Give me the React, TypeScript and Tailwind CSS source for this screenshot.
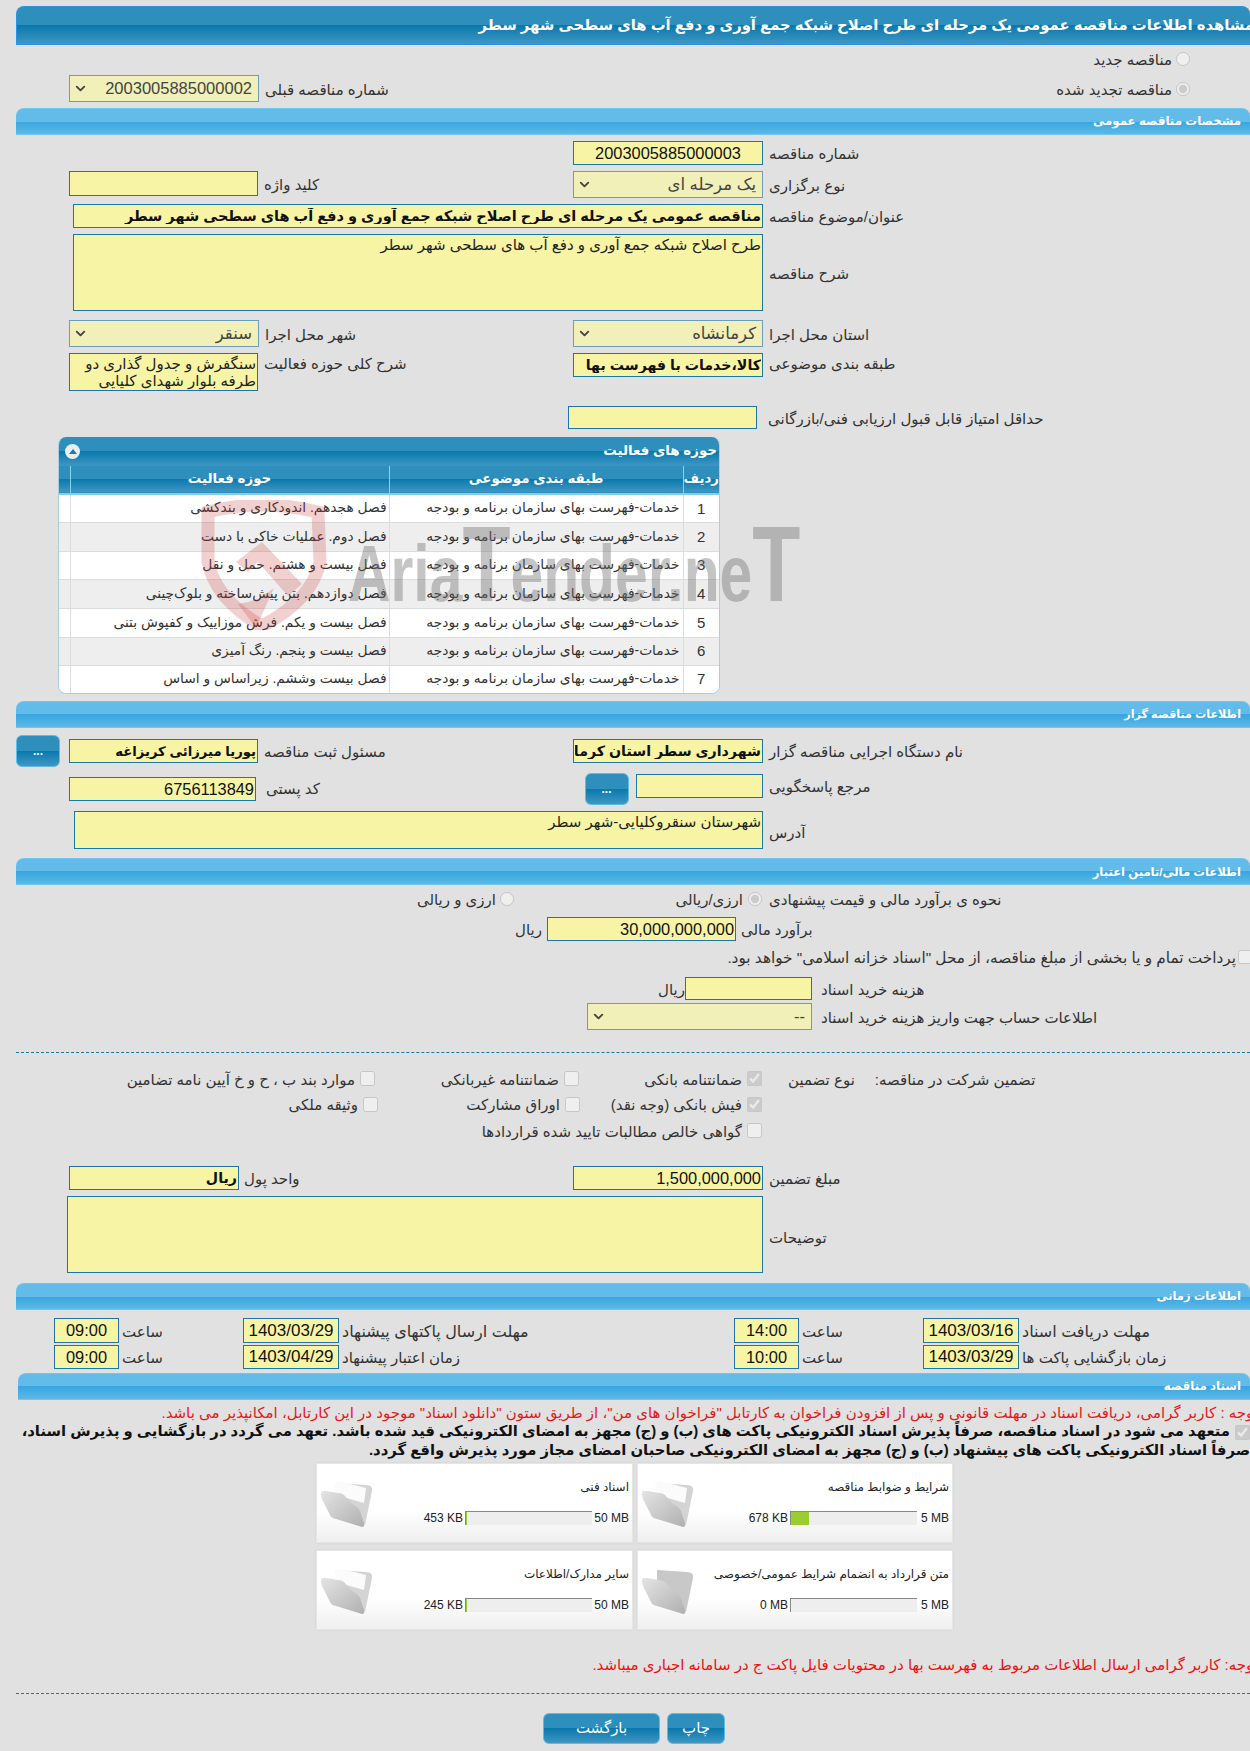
import React from "react";
import { ChevronDown } from "lucide-react";

const barDark = "bg-[linear-gradient(180deg,#2e8fbc_0%,#2e8fbc_50%,#0a78ac_50%,#3f97c3_100%)]";
const barLight = "bg-[linear-gradient(180deg,#62bbe9_0%,#62bbe9_50%,#38a6df_50%,#5cb8e8_100%)]";

function L({ children, className = "", size = "text-[15px] text-[#333]" }: { children: React.ReactNode; className?: string; size?: string }) {
  return (
    <span dir="rtl" className={"inline-block pt-[2px] whitespace-nowrap leading-[16px] " + size + " " + className}>
      {children}
    </span>
  );
}

function Input({ value = "", className = "", size = "" }: { value?: string; className?: string; size?: string }) {
  return (
    <input
      readOnly
      dir="rtl"
      value={value}
      className={"shrink-0 bg-[#f7f5a5] border border-[#1b76a9] px-px outline-none text-[#111] " + (size || "text-[16.4px]") + " " + className}
    />
  );
}

function Area({ value = "", className = "" }: { value?: string; className?: string }) {
  return (
    <textarea
      readOnly
      dir="rtl"
      value={value}
      className={"shrink-0 resize-none overflow-hidden bg-[#f7f5a5] border border-[#1b76a9] px-px pt-px text-[15px] leading-[17px] text-[#222] outline-none " + className}
    />
  );
}

function Sel({ value, className = "" }: { value: string; className?: string }) {
  return (
    <div className={"shrink-0 flex items-center justify-between bg-[#f1f0b8] border border-[#6a9cbf] pl-[3px] pr-[6px] h-[27px] text-[16.5px] text-[#444] " + className}>
      <ChevronDown size={15} strokeWidth={3} color="#444" />
      <span dir="rtl" className="whitespace-nowrap">{value}</span>
    </div>
  );
}

function Section({ title, className = "", size = "text-[11.8px]" }: { title: string; className?: string; size?: string }) {
  return (
    <div dir="rtl" className={"h-[27px] flex items-center rounded-tl-[8px] rounded-tr-[8px] border-t border-[#6cc8f0] border-b pr-[9px] font-bold text-white " + size + " " + barLight + " " + className}>
      {title}
    </div>
  );
}

function Row({ left, right, className = "" }: { left?: React.ReactNode; right?: React.ReactNode; className?: string }) {
  return (
    <div className={"flex items-start " + className}>
      <div className="w-[573px] shrink-0 pl-[69px] flex items-center">{left}</div>
      <div className="flex items-center">{right}</div>
    </div>
  );
}

function Check({ w, label, checked = false }: { w: string; label: string; checked?: boolean }) {
  return (
    <div className={"shrink-0 flex items-center justify-end gap-[5px] " + w}>
      <L>{label}</L>
      <input type="checkbox" disabled checked={checked} readOnly className="m-0 w-[15px] h-[15px] shrink-0" />
    </div>
  );
}

function Folder({ paper = true }: { paper?: boolean }) {
  return (
    <svg width="60" height="60" viewBox="0 0 60 60" className="shrink-0 mt-[7px] -ml-[1px]">
      <defs>
        <linearGradient id="fold" x1="0" y1="0" x2="1" y2="1">
          <stop offset="0" stopColor="#e4e4e4" />
          <stop offset="1" stopColor="#b0b0b0" />
        </linearGradient>
      </defs>
      <path d="M20 12 L50 14 Q57 14 56 20 L49 54 L20 30 Z" fill={paper ? "#d4d4d4" : "#c8c8c8"} />
      {paper && <path d="M18 13 L22 10 L50 17 L48 32 L20 24 Z" fill="#fbfbfb" />}
      <path d="M6 20 Q4 22 6 28 L14 44 Q15 47 20 48 L46 56 Q49 56 48 52 L44 40 Q42 36 36 33 L28 24 Q26 22 22 22 L10 20 Z" fill="url(#fold)" />
    </svg>
  );
}

function Tile({ title, size, max, fill, w, maxW, paper = true }: { title: string; size: string; max: string; fill: number; w: string; maxW: string; paper?: boolean }) {
  return (
    <div className={"h-[80px] flex bg-[linear-gradient(180deg,#ffffff_0%,#ffffff_60%,#efefef_100%)] border border-[#e6e6e6] shadow-[0_0_2px_#cfcfcf] shrink-0 " + w}>
      <Folder paper={paper} />
      <div className="flex-1 flex flex-col items-end pr-[3px] pt-[13px]">
        <L size="text-[12px] text-[#222]">{title}</L>
        <div className="mt-[16px] flex items-center gap-[2px] text-[12px] leading-[14px] text-[#222]">
          <span className="whitespace-nowrap">{size}</span>
          <div className="w-[127px] h-[14px] bg-[#eeeeee] border-t border-l border-[#888]">
            <div className="h-full bg-[#9acd32]" style={{ width: fill }} />
          </div>
          <span className={"whitespace-nowrap text-right " + maxW}>{max}</span>
        </div>
      </div>
    </div>
  );
}

const activities = [
  "فصل هجدهم. اندودکاری و بندکشی",
  "فصل دوم. عملیات خاکی با دست",
  "فصل بیست و هشتم. حمل و نقل",
  "فصل دوازدهم. بتن پیش‌ساخته و بلوک‌چینی",
  "فصل بیست و یکم. فرش موزاییک و کفپوش بتنی",
  "فصل بیست و پنجم. رنگ آمیزی",
  "فصل بیست وششم. زیراساس و اساس",
];
const rowHeights = ["h-[28px]", "h-[29px]", "h-[28px]", "h-[29px]", "h-[29px]", "h-[28px]", "h-[28px]"];

function Watermark() {
  return (
    <div className="absolute left-[142px] top-[63px] w-[610px] h-[130px] pointer-events-none">
      <svg width="130" height="130" viewBox="0 0 130 130" className="absolute left-0 top-0">
        <path d="M8 12 Q62 -2 118 12 L120 62 Q112 100 62 126 Q16 100 8 62 Z" fill="none" stroke="#c83c3c" strokeOpacity="0.24" strokeWidth="13" />
        <path d="M36 62 L62 42 L102 84 L88 96 L58 62 L48 72 Z" fill="#c83c3c" fillOpacity="0.24" />
        <path d="M60 98 L74 88 L56 128 L38 104 L48 102 Z" fill="#c83c3c" fillOpacity="0.24" />
      </svg>
      <div className="absolute left-[148px] top-[4px] flex items-baseline whitespace-nowrap origin-left scale-x-[0.735] text-[#6e6e6e]/40 font-bold text-[80px] leading-[120px]">
        Aria<span className="text-[107px]">T</span>ender.ne<span className="text-[107px]">T</span>
      </div>
    </div>
  );
}

function ActivityTable() {
  return (
    <div className="relative ml-[58px] mt-[8px] w-[662px] h-[257px]">
      <div className="w-[662px] h-[257px] rounded-[8px] overflow-hidden border-b border-x border-[#a8cde6] bg-white">
        <div dir="rtl" className={"h-[29px] flex items-center justify-between pr-[2px] pl-[6px] text-[13.4px] font-bold text-white " + barDark}>
          <span>حوزه های فعالیت</span>
          <span className="w-[15px] h-[15px] rounded-full bg-[#e6eef3] flex items-center justify-center">
            <span className="w-0 h-0 border-x-[4px] border-x-transparent border-b-[5px] border-b-[#1b7aa9]" />
          </span>
        </div>
        <table dir="rtl" className="table-fixed border-collapse w-[660px] text-[13.8px] text-[#333]">
          <colgroup>
            <col className="w-[36px]" />
            <col className="w-[294px]" />
            <col className="w-[319px]" />
            <col className="w-[11px]" />
          </colgroup>
          <thead>
            <tr className={"h-[28px] text-white font-bold text-[13.4px] border-b-2 border-[#7fd0f0] " + barDark}>
              <th className="font-bold border-l border-[#8fd0ef]">ردیف</th>
              <th className="font-bold border-l border-[#8fd0ef]">طبقه بندی موضوعی</th>
              <th className="font-bold border-l border-[#8fd0ef]">حوزه فعالیت</th>
              <th />
            </tr>
          </thead>
          <tbody>
            {activities.map((a, i) => (
              <tr key={i} className={rowHeights[i] + " border-b border-[#dcdcdc] " + (i % 2 ? "bg-[#eeeeee]" : "bg-white")}>
                <td className="pt-px text-center text-[15px] border-l border-[#dcdcdc]">{i + 1}</td>
                <td className="pt-px pr-[3px] whitespace-nowrap border-l border-[#dcdcdc]">خدمات-فهرست بهای سازمان برنامه و بودجه</td>
                <td className="pt-px pr-[2px] whitespace-nowrap border-l border-[#dcdcdc]">{a}</td>
                <td />
              </tr>
            ))}
          </tbody>
        </table>
      </div>
      <Watermark />
    </div>
  );
}

export default function App() {
  return (
    <div className="w-[1250px] h-[1751px] overflow-hidden bg-[#e1e1e1] font-['Liberation_Sans','DejaVu_Sans',sans-serif]">
      <div className="h-[6px]" />
      <div dir="rtl" className={"ml-[16px] h-[39px] flex items-center rounded-tl-[8px] rounded-tr-[8px] border border-[#2c93de] border-r-0 text-[14.8px] font-bold text-white whitespace-nowrap overflow-hidden " + barDark}>
        <span className="-mr-[4px]">مشاهده اطلاعات مناقصه عمومی یک مرحله ای طرح اصلاح شبکه جمع آوری و دفع آب های سطحی شهر سطر</span>
      </div>

      <div className="mt-[7px] h-[14px] flex items-center justify-end gap-[4px] pr-[60px]">
        <L>مناقصه جدید</L>
        <input type="radio" disabled className="m-0 w-[14px] h-[14px]" />
      </div>
      <div className="mt-[9px] flex items-center pl-[69px] pr-[60px]">
        <Sel value="2003005885000002" className="w-[190px]" />
        <L className="ml-[6px]">شماره مناقصه قبلی</L>
        <div className="ml-auto flex items-center gap-[4px]">
          <L>مناقصه تجدید شده</L>
          <input type="radio" disabled checked readOnly className="m-0 w-[14px] h-[14px]" />
        </div>
      </div>

      <Section title="مشخصات مناقصه عمومی" className="ml-[16px] mt-[6px]" />

      <Row className="mt-[6px] h-[24px]" right={<><Input value="2003005885000003" className="w-[190px] h-[24px] text-center" /><L className="ml-[6px]">شماره مناقصه</L></>} />
      <Row
        className="mt-[6px] h-[27px]"
        left={<><Input className="w-[189px] h-[25px]" /><L className="ml-[6px]">کلید واژه</L></>}
        right={<><Sel value="یک مرحله ای" className="w-[190px]" /><L className="ml-[6px]">نوع برگزاری</L></>}
      />
      <div className="mt-[6px] ml-[73px] flex items-center">
        <Input size="text-[14.5px] font-bold" value="مناقصه عمومی یک مرحله ای طرح اصلاح شبکه جمع آوری و دفع آب های سطحی شهر سطر" className="w-[690px] h-[24px]" />
        <L className="ml-[6px]">عنوان/موضوع مناقصه</L>
      </div>
      <div className="mt-[6px] ml-[73px] flex items-center">
        <Area value="طرح اصلاح شبکه جمع آوری و دفع آب های سطحی شهر سطر" className="w-[690px] h-[77px]" />
        <L className="ml-[6px]">شرح مناقصه</L>
      </div>
      <Row
        className="mt-[9px] h-[27px]"
        left={<><Sel value="سنقر" className="w-[190px]" /><L className="ml-[6px]">شهر محل اجرا</L></>}
        right={<><Sel value="کرمانشاه" className="w-[190px]" /><L className="ml-[6px]">استان محل اجرا</L></>}
      />
      <Row
        className="mt-[6px] h-[38px]"
        left={<div className="flex items-start"><Area value="سنگفرش و جدول گذاری دو طرفه بلوار شهدای کلیایی" className="w-[189px] h-[38px] text-[#222]" /><L className="ml-[6px] mt-[1px]">شرح کلی حوزه فعالیت</L></div>}
        right={<div className="flex items-start"><Input size="text-[14.2px] font-bold" value="کالا،خدمات با فهرست بها" className="w-[190px] h-[24px]" /><L className="ml-[6px] mt-[1px]">طبقه بندی موضوعی</L></div>}
      />
      <div className="mt-[15px] pl-[568px] flex items-center">
        <Input className="w-[189px] h-[23px]" />
        <L className="ml-[11px]">حداقل امتیاز قابل قبول ارزیابی فنی/بازرگانی</L>
      </div>

      <ActivityTable />

      <Section title="اطلاعات مناقصه گزار" size="text-[11.2px]" className="ml-[16px] mt-[7px] h-[26px]" />

      <div className="mt-[7px] h-[32px] flex items-center pl-[16px]">
        <button className={"w-[44px] h-[32px] shrink-0 rounded-[6px] border border-[#5cbdea] text-white text-[12px] font-bold leading-none " + barDark}>...</button>
        <Input size="text-[13.2px] font-bold" value="پوریا میرزائی کریزاغه" className="ml-[9px] w-[189px] h-[24px]" />
        <L className="ml-[6px] w-[309px] shrink-0 text-left">مسئول ثبت مناقصه</L>
        <Input size="text-[14.2px] font-bold" value="شهرداری سطر استان کرمانشاه" className="w-[190px] h-[24px]" />
        <L className="ml-[6px]">نام دستگاه اجرایی مناقصه گزار</L>
      </div>
      <div className="mt-[6px] h-[32px] flex items-start pl-[69px]">
        <Input value="6756113849" className="mt-[4px] w-[187px] h-[24px]" />
        <L className="ml-[10px] mt-[6px] w-[318.5px] shrink-0 text-left">کد پستی</L>
        <button className={"w-[44px] h-[32px] shrink-0 rounded-[6px] border border-[#5cbdea] text-white text-[12px] font-bold leading-none " + barDark}>...</button>
        <Input className="ml-[7.5px] mt-[1px] w-[127px] h-[24px]" />
        <L className="ml-[6px] mt-[4px]">مرجع پاسخگویی</L>
      </div>
      <div className="mt-[6px] ml-[74px] flex items-center">
        <Area value="شهرستان سنقروکلیایی-شهر سطر" className="w-[689px] h-[38px]" />
        <L className="ml-[6px] mt-[4px]">آدرس</L>
      </div>

      <Section title="اطلاعات مالی/تامین اعتبار" size="text-[11.6px]" className="ml-[16px] mt-[9px]" />

      <div className="mt-[6px] h-[16px] flex items-center pl-[420px]">
        <L className="w-[76px] shrink-0 text-right">ارزی و ریالی</L>
        <input type="radio" disabled className="ml-[4px] m-0 w-[14px] h-[14px] shrink-0" />
        <L className="w-[229px] shrink-0 text-right">ارزی/ریالی</L>
        <input type="radio" disabled checked readOnly className="ml-[5px] m-0 w-[14px] h-[14px] shrink-0" />
        <L className="ml-[7px]">نحوه ی برآورد مالی و قیمت پیشنهادی</L>
      </div>
      <div className="mt-[10px] flex items-center pl-[518px]">
        <L className="w-[24px] shrink-0">ریال</L>
        <Input value="30,000,000,000" className="ml-[5px] w-[189px] h-[24px]" />
        <L className="ml-[5px]">برآورد مالی</L>
      </div>
      <div className="mt-[9px] h-[14px] flex items-center justify-end -mr-[2px]">
        <L size="text-[15.3px] text-[#333]">پرداخت تمام و یا بخشی از مبلغ مناقصه، از محل "اسناد خزانه اسلامی" خواهد بود.</L>
        <input type="checkbox" disabled className="ml-[2px] m-0 w-[14px] h-[14px] shrink-0" />
      </div>
      <div className="mt-[13px] flex items-center pl-[662px]">
        <L className="w-[23px] shrink-0 text-right">ریال</L>
        <Input className="w-[127px] h-[23px]" />
        <L className="ml-[9px]">هزینه خرید اسناد</L>
      </div>
      <div className="mt-[3px] flex items-center pl-[587px]">
        <Sel value="--" className="w-[225px]" />
        <L className="ml-[9px]">اطلاعات حساب جهت واریز هزینه خرید اسناد</L>
      </div>

      <div className="mt-[22px] ml-[16px] border-t border-dashed border-[#1b76a9]" />

      <div className="mt-[18px] h-[15px] flex items-center pl-[100px]">
        <Check w="w-[275px]" label="موارد بند ب ، ح و خ آیین نامه تضامین" />
        <Check w="w-[204px]" label="ضمانتنامه غیربانکی" />
        <Check w="w-[183px]" label="ضمانتنامه بانکی" checked />
        <L className="ml-[26px]">نوع تضمین</L>
        <L className="ml-[20px]">تضمین شرکت در مناقصه:</L>
      </div>
      <div className="mt-[10px] h-[16px] flex items-center pl-[100px]">
        <Check w="w-[278px]" label="وثیقه ملکی" />
        <Check w="w-[202px]" label="اوراق مشارکت" />
        <Check w="w-[182px]" label="فیش بانکی (وجه نقد)" checked />
      </div>
      <div className="mt-[11px] h-[15px] flex items-center pl-[100px]">
        <Check w="w-[662px]" label="گواهی خالص مطالبات تایید شده قراردادها" />
      </div>

      <div className="mt-[28px] flex items-center pl-[69px]">
        <Input size="text-[14.2px] font-bold" value="ریال" className="w-[170px] h-[24px]" />
        <L className="ml-[5px] w-[329px] shrink-0 text-left">واحد پول</L>
        <Input value="1,500,000,000" className="w-[190px] h-[24px]" />
        <L className="ml-[6px]">مبلغ تضمین</L>
      </div>
      <div className="mt-[6px] ml-[67px] flex items-center">
        <Area className="w-[696px] h-[77px]" />
        <L className="ml-[6px] mt-[4px]">توضیحات</L>
      </div>

      <Section title="اطلاعات زمانی" size="text-[11.5px]" className="ml-[16px] mt-[10px]" />

      <div className="mt-[8px] h-[25px] flex items-center pl-[54px]">
        <Input value="09:00" className="w-[65px] h-[25px] text-center" />
        <L className="w-[124px] shrink-0 pl-[3px] text-left">ساعت</L>
        <Input size="text-[17px]" value="1403/03/29" className="w-[96px] h-[25px] text-center" />
        <L size="text-[16px] text-[#333]" className="w-[395px] shrink-0 pl-[3px] text-left">مهلت ارسال پاکتهای پیشنهاد</L>
        <Input value="14:00" className="w-[65px] h-[25px] text-center" />
        <L className="w-[124px] shrink-0 pl-[3px] text-left">ساعت</L>
        <Input size="text-[17px]" value="1403/03/16" className="w-[96px] h-[25px] text-center" />
        <L size="text-[16px] text-[#333]" className="ml-[3px]">مهلت دریافت اسناد</L>
      </div>
      <div className="mt-[2px] h-[24px] flex items-center pl-[54px]">
        <Input value="09:00" className="w-[65px] h-[24px] text-center" />
        <L className="w-[124px] shrink-0 pl-[3px] text-left">ساعت</L>
        <Input size="text-[17px]" value="1403/04/29" className="w-[96px] h-[24px] text-center" />
        <L className="w-[395px] shrink-0 pl-[3px] text-left">زمان اعتبار پیشنهاد</L>
        <Input value="10:00" className="w-[65px] h-[24px] text-center" />
        <L className="w-[124px] shrink-0 pl-[3px] text-left">ساعت</L>
        <Input size="text-[17px]" value="1403/03/29" className="w-[96px] h-[24px] text-center" />
        <L className="ml-[3px]">زمان بازگشایی پاکت ها</L>
      </div>

      <Section title="اسناد مناقصه" className="ml-[18px] mt-[4px]" />

      <div dir="rtl" className="mt-[5px] h-[16px] -mr-[8px] whitespace-nowrap text-[15px] leading-[16px] text-[#e01b1b] w-[1258px]">
        توجه : کاربر گرامی، دریافت اسناد در مهلت قانونی و پس از افزودن فراخوان به کارتابل "فراخوان های من"، از طریق ستون "دانلود اسناد" موجود در این کارتابل، امکانپذیر می باشد.
      </div>
      <div dir="rtl" className="mt-[1px] h-[38px] whitespace-nowrap text-[14.8px] leading-[19px] font-bold text-[#111]">
        <input type="checkbox" disabled checked readOnly className="m-0 ml-[5px] w-[15px] h-[15px] align-middle" />
        متعهد می شود در اسناد مناقصه، صرفاً پذیرش اسناد الکترونیکی پاکت های (ب) و (ج) مجهز به امضای الکترونیکی قید شده باشد. تعهد می گردد در بازگشایی و پذیرش اسناد،
        <br />
        صرفاً اسناد الکترونیکی پاکت های پیشنهاد (ب) و (ج) مجهز به امضای الکترونیکی صاحبان امضای مجاز مورد پذیرش واقع گردد.
      </div>

      <div className="mt-[3px] pl-[316px] flex gap-[4px]">
        <Tile w="w-[317px]" maxW="w-[35px]" title="اسناد فنی" size="453 KB" max="50 MB" fill={1} />
        <Tile w="w-[316px]" maxW="w-[30px]" title="شرایط و ضوابط مناقصه" size="678 KB" max="5 MB" fill={18} />
      </div>
      <div className="mt-[7px] pl-[316px] flex gap-[4px]">
        <Tile w="w-[317px]" maxW="w-[35px]" title="سایر مدارک/اطلاعات" size="245 KB" max="50 MB" fill={1} />
        <Tile w="w-[316px]" maxW="w-[30px]" title="متن قرارداد به انضمام شرایط عمومی/خصوصی" size="0 MB" max="5 MB" fill={0} paper={false} />
      </div>

      <div dir="rtl" className="mt-[27px] h-[16px] -mr-[8px] w-[1258px] whitespace-nowrap text-[15px] leading-[16px] text-[#f01010]">
        توجه: کاربر گرامی ارسال اطلاعات مربوط به فهرست بها در محتویات فایل پاکت ج در سامانه اجباری میباشد.
      </div>

      <div className="mt-[20px] ml-[16px] border-t border-dashed border-[#1b76a9]" />

      <div className="mt-[19px] pl-[543px] flex gap-[7px]">
        <button className={"w-[117px] h-[31px] rounded-[6px] border border-[#5cbdea] text-white text-[15px] " + barDark}>بازگشت</button>
        <button className={"w-[58px] h-[31px] rounded-[6px] border border-[#5cbdea] text-white text-[15px] " + barDark}>چاپ</button>
      </div>
    </div>
  );
}
